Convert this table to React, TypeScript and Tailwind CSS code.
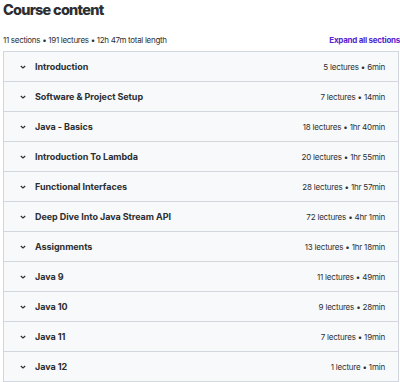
import { useState } from "react";

const sections = [
  { title: "Introduction", info: "5 lectures • 6min" },
  { title: "Software & Project Setup", info: "7 lectures • 14min" },
  { title: "Java - Basics", info: "18 lectures • 1hr 40min" },
  { title: "Introduction To Lambda", info: "20 lectures • 1hr 55min" },
  { title: "Functional Interfaces", info: "28 lectures • 1hr 57min" },
  { title: "Deep Dive Into Java Stream API", info: "72 lectures • 4hr 1min" },
  { title: "Assignments", info: "13 lectures • 1hr 18min" },
  { title: "Java 9", info: "11 lectures • 49min" },
  { title: "Java 10", info: "9 lectures • 28min" },
  { title: "Java 11", info: "7 lectures • 19min" },
  { title: "Java 12", info: "1 lecture • 1min" },
];

function Chevron() {
  return (
    <svg width="8" height="8" viewBox="0 0 8 8" className="text-[#2d2f31]">
      <path d="M1.8 3 L4 5 L6.2 3" fill="none" stroke="currentColor" strokeWidth="1.2" />
    </svg>
  );
}

export default function App() {
  const [open, setOpen] = useState<number[]>([]);
  const toggle = (i: number) => setOpen((o) => (o.includes(i) ? o.filter((x) => x !== i) : [...o, i]));

  return (
    <div className="w-[400px] h-[382px] overflow-hidden bg-white pl-[3px] text-[#2d2f31] font-['Inter',sans-serif]">
      <h2 className="text-[14.5px] font-extrabold leading-[18px] pt-[1px] tracking-[-0.75px]">Course content</h2>
      <div className="flex items-center justify-between mt-[15px] h-[12px] text-[8px]">
        <span className="text-[#2d2f31] tracking-[-0.3px]">11 sections • 191 lectures • 12h 47m total length</span>
        <button className="font-bold text-[#5624d0] whitespace-nowrap tracking-[-0.25px]">Expand all sections</button>
      </div>
      <div className="mt-[5px] w-[396px] border border-[#d1d7dc] border-b-0">
        {sections.map((s, i) => (
          <div key={s.title} className="border-b border-[#d1d7dc] bg-[#f7f9fa]">
            <button
              onClick={() => toggle(i)}
              className="w-full h-[29px] flex items-center pl-[15px] pr-[13px] text-left"
            >
              <Chevron />
              <span className="ml-[8px] text-[9px] font-bold flex-1 tracking-[-0.05px]">{s.title}</span>
              <span className="text-[8px] text-[#2d2f31] tracking-[-0.2px]">{s.info}</span>
            </button>
          </div>
        ))}
      </div>
    </div>
  );
}
